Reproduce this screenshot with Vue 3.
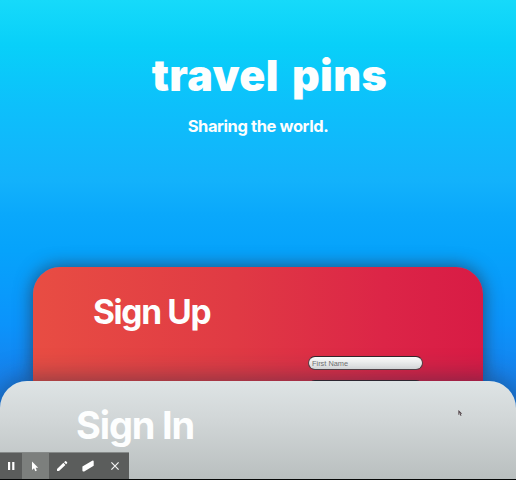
<script setup>
const fields = ['First Name', 'Last Name']
const tools = ['pause', 'pointer', 'pen', 'eraser', 'close']
</script>

<template>
  <main class="page">
    <header class="hero">
      <h1 class="brand">travel pins</h1>
      <p class="tagline">Sharing the world.</p>
    </header>

    <section class="signup">
      <h2 class="signup-title">Sign Up</h2>
      <form class="form" @submit.prevent>
        <input v-for="f in fields" :key="f" class="field" type="text" :placeholder="f" />
      </form>
    </section>

    <section class="signin">
      <h2 class="signin-title">Sign In</h2>
      <svg class="cursor" viewBox="0 0 5 7">
        <path d="M0.4 0v5l1.3-1 1 2 .8-.4-.9-1.8h1.6z" fill="#4a3b40" />
        <path d="M1.4 2.4v1.4h1.2z" fill="#fff" />
      </svg>
    </section>

    <nav class="toolbar">
      <button v-for="t in tools" :key="t" class="tool" :class="t" :aria-label="t">
        <svg v-if="t === 'pause'" viewBox="0 0 14 14">
          <path d="M4 3h2.2v8H4zM8.2 3h2.2v8h-2.2z" fill="#fff" />
        </svg>
        <svg v-else-if="t === 'pointer'" viewBox="0 0 14 14">
          <path d="M4 2.4v8.6l2-1.7 1.3 2.9 1.5-.7-1.2-2.7h2.6z" fill="#fff" />
        </svg>
        <svg v-else-if="t === 'pen'" viewBox="0 0 14 14">
          <path d="M2 12v-2.1l6.4-6.1 2 2.1L4 12zM9.1 3.2l1-.9q.5-.4 1 0l1 1q.4.5 0 .9l-1 1z" fill="#fff" />
        </svg>
        <svg v-else-if="t === 'eraser'" viewBox="0 0 14 14">
          <path d="M1.4 7.6 11.2 1.7q1.5-.5 1.5.8v4.2L3.2 12.4q-1.8.5-1.8-1z" fill="#fff" />
        </svg>
        <svg v-else viewBox="0 0 14 14">
          <path d="M3.4 3.4l7.2 7.2M10.6 3.4l-7.2 7.2" stroke="#f4f4f4" stroke-width="1.2" />
        </svg>
      </button>
    </nav>
  </main>
</template>

<style>
body {
  margin: 0;
}
</style>

<style scoped>
.page {
  box-sizing: border-box;
  position: relative;
  display: flex;
  flex-direction: column;
  width: 516px;
  height: 480px;
  overflow: hidden;
  border-bottom: 1px solid #050707;
  background: linear-gradient(#16dafa 0, #08d0f9 45px, #0dc0fb 105px, #13b2fb 180px, #0aa8fb 215px, #06a3fb 250px, #0b93fb 325px, #1683ee 375px, #1a78df 420px);
  font-family: Inter, "Liberation Sans", sans-serif;
  color: #fdfefe;
}

.hero {
  display: flex;
  flex-direction: column;
  align-items: center;
  height: 267px;
  flex: none;
}

h1, h2, p {
  margin: 0;
  white-space: nowrap;
}

.brand {
  padding: 49px 0 0 23px;
  font-size: 43px;
  line-height: 52px;
  font-weight: 900;
  letter-spacing: 0.4px;
  word-spacing: 4px;
}

.tagline {
  padding-top: 13px;
  font-size: 16.5px;
  line-height: 24px;
  font-weight: 700;
  letter-spacing: -0.4px;
}

.signup {
  box-sizing: border-box;
  display: flex;
  flex-direction: column;
  flex: none;
  height: 114px;
  margin: 0 33.5px 0 33px;
  padding: 25px 59.5px 0 60px;
  border-radius: 27px 27px 0 0;
  background: linear-gradient(90deg, #e84d43, #e03a44 45%, #dc2547 78%, #d81b45);
  box-shadow: 0 0 18px rgba(40, 50, 70, 0.75);
}

.signup-title {
  font-size: 33.5px;
  line-height: 40px;
  font-weight: 700;
  letter-spacing: -1.35px;
}

.form {
  display: flex;
  flex-direction: column;
  align-items: flex-end;
  gap: 10px;
  padding-top: 24px;
}

.field {
  box-sizing: border-box;
  flex: none;
  width: 115px;
  height: 14px;
  padding: 0 3px;
  border: 1px solid #5b4247;
  border-top-color: #35252a;
  border-radius: 7px;
  background: linear-gradient(#fff, #e9eaea);
  font: 7.4px/12px "Liberation Sans", sans-serif;
  outline: none;
}

.field::placeholder {
  color: #747474;
}

.signin {
  box-sizing: border-box;
  position: relative;
  display: flex;
  justify-content: space-between;
  flex: 1;
  padding: 20px 53px 0 76px;
  border-radius: 27px 27px 0 0;
  background: linear-gradient(#dee4e5, #d1d6d7 40%, #b9bfbf);
  box-shadow: 0 0 28px rgba(30, 45, 70, 0.6);
}

.signin-title {
  font-size: 38px;
  line-height: 48px;
  font-weight: 700;
  letter-spacing: -1.15px;
}

.cursor {
  width: 5px;
  height: 7px;
  margin-top: 9px;
}

.toolbar {
  box-sizing: border-box;
  position: absolute;
  left: 0;
  bottom: 0;
  display: flex;
  width: 129px;
  height: 27px;
  border-top: 1px solid #868a89;
  background: #5b5d5c;
}

.tool {
  display: flex;
  align-items: center;
  justify-content: center;
  box-sizing: border-box;
  width: 26.6px;
  padding: 0;
  border: 0;
  background: none;
}

.tool.pause {
  width: 22px;
}

.tool.pointer {
  background: #7c7f7d;
}

.tool svg {
  width: 14px;
  height: 14px;
}
</style>
